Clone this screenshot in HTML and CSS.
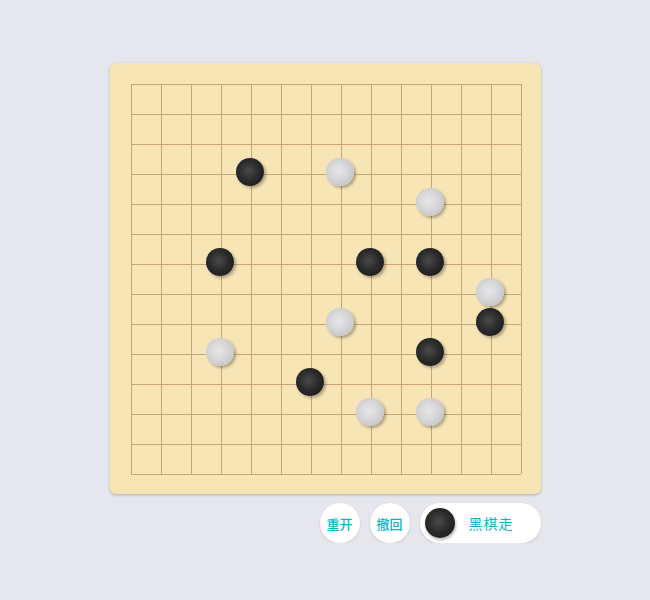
FILE: index.html
```html
<!DOCTYPE html>
<html lang="zh">
<head>
    <meta charset="UTF-8">
    <title>五子棋</title>
    <link rel="stylesheet" href="styles.css">
</head>
<body>
    <div class="game">
        <div class="board">
            <div class="grid" id="grid">
                <svg class="lines" width="391" height="391" id="lines"></svg>
            </div>
        </div>
        <div class="controls">
            <button class="round-btn">重开</button>
            <button class="round-btn">撤回</button>
            <div class="turn">
                <span class="stone black turn-stone"></span>
                <span class="turn-text">黑棋走</span>
            </div>
        </div>
    </div>

    <script>
        const grid = document.getElementById("grid");
        const lines = document.getElementById("lines");
        const size = 14;
        const gap = 30;

        // grid lines
        let svg = "";
        for (let i = 0; i < size; i++) {
            const p = i * gap + 0.5;
            svg += `<line x1="0" y1="${p}" x2="390" y2="${p}" />`;
            svg += `<line x1="${p}" y1="0" x2="${p}" y2="390" />`;
        }
        lines.innerHTML = svg;

        // [col, row, color]
        const stones = [
            [4, 3, "black"], [7, 3, "white"], [10, 4, "white"],
            [3, 6, "black"], [8, 6, "black"], [10, 6, "black"],
            [12, 7, "white"], [12, 8, "black"], [7, 8, "white"],
            [3, 9, "white"], [10, 9, "black"], [6, 10, "black"],
            [8, 11, "white"], [10, 11, "white"]
        ];

        stones.forEach(([c, r, color]) => {
            const s = document.createElement("span");
            s.className = "stone piece " + color;
            s.style.left = (c * gap - 15) + "px";
            s.style.top = (r * gap - 16) + "px";
            grid.appendChild(s);
        });
    </script>
</body>
</html>
```

FILE: styles.css
```css
body { margin: 0; background: #e6e7ec; font-family: "Noto Sans CJK SC", "Noto Sans", sans-serif; }
.game { width: 431px; margin: 63px auto 0; display: flex; flex-direction: column; }
.board {
    background: #f7e5b6;
    border-radius: 6px;
    padding: 21px 20px 19px 21px;
    box-shadow: 0 1px 3px rgba(0, 0, 0, 0.25);
}
.grid { position: relative; width: 391px; height: 391px; }
.lines { display: block; }
.lines line { stroke: #c6a679; stroke-width: 1; }
.stone { display: block; width: 28px; height: 28px; border-radius: 50%; }
.piece { position: absolute; box-shadow: 2px 2px 3px rgba(0, 0, 0, 0.3); }
.black { background: radial-gradient(circle at 45% 45%, #4a4a4a 0%, #2b2b2b 45%, #141414 100%); }
.white { background: radial-gradient(circle at 45% 45%, #e6e6e8 0%, #d6d6d8 45%, #b9b9bc 100%); }
.controls { display: flex; justify-content: flex-end; gap: 10px; margin-top: 9px; }
.round-btn {
    width: 40px; height: 40px; border-radius: 50%; border: none; padding: 0;
    background: #fff; color: #0fb3c7; font-family: inherit; font-size: 13px; font-weight: 500;
    box-shadow: 0 1px 3px rgba(0, 0, 0, 0.12); cursor: pointer;
}
.turn {
    width: 121px; height: 40px; border-radius: 20px; background: #fff;
    display: flex; align-items: center; box-sizing: border-box; padding-left: 5px;
    box-shadow: 0 1px 3px rgba(0, 0, 0, 0.12);
}
.turn-stone { width: 30px; height: 30px; box-shadow: 1px 2px 3px rgba(0, 0, 0, 0.3); }
.turn-text { color: #0fb3c7; font-size: 14px; margin-left: 14px; letter-spacing: 1px; }
```
